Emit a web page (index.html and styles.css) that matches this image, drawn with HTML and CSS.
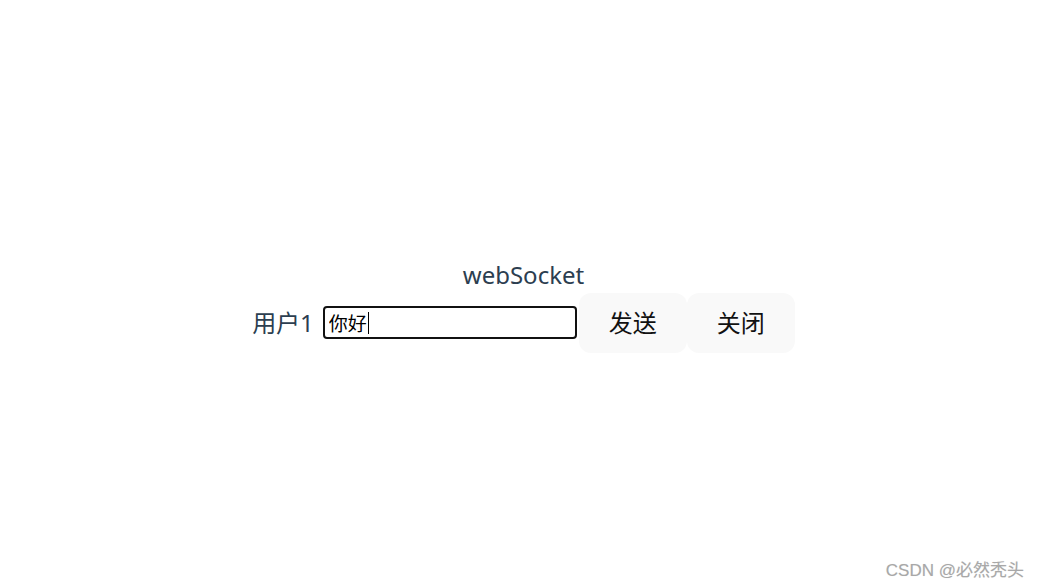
FILE: index.html
```html
<!DOCTYPE html>
<html lang="zh-CN">
<head>
    <meta charset="UTF-8">
    <meta name="viewport" content="width=device-width, initial-scale=1.0">
    <title>webSocket</title>
    <link rel="stylesheet" href="styles.css">
</head>
<body>
    <div id="app">
        <div class="title">webSocket</div>
        <div class="chat-row">
            <span class="user-name">用户1</span>
            <span class="input-wrap">
                <input type="text" class="msg-input" value="你好">
                <span class="caret"></span>
            </span>
            <button class="btn">发送</button>
            <button class="btn">关闭</button>
        </div>
    </div>
    <div class="watermark">CSDN @必然秃头</div>
</body>
</html>
```

FILE: styles.css
```css
:root {
    --text-main: #2c3e50;
    --btn-bg: #f9f9f9;
}

* {
    margin: 0;
    padding: 0;
    box-sizing: border-box;
}

body {
    font-family: "Noto Sans", "Noto Sans CJK SC", sans-serif;
    color: var(--text-main);
    background: #ffffff;
    min-height: 100vh;
    display: flex;
    justify-content: center;
    align-items: center;
}

#app {
    display: flex;
    flex-direction: column;
    align-items: center;
    padding: 22px 0 0 8px;
}

.title {
    font-size: 24px;
    line-height: 36px;
}

.chat-row {
    display: flex;
    align-items: center;
}

.user-name {
    font-size: 24px;
    line-height: 32px;
    margin-right: 9px;
}

.input-wrap {
    position: relative;
    display: inline-flex;
    margin-right: 2px;
}

.msg-input {
    width: 254px;
    height: 33px;
    border: 2px solid #111111;
    border-radius: 4px;
    padding: 0 4px;
    font-family: "Noto Sans CJK SC", sans-serif;
    font-size: 19px;
    color: #000000;
    outline: none;
}

.caret {
    position: absolute;
    left: 45px;
    top: 6px;
    width: 1px;
    height: 22px;
    background: #000000;
}

.btn {
    font-family: "Noto Sans", "Noto Sans CJK SC", sans-serif;
    font-size: 24px;
    line-height: 32px;
    padding: 14px 30px;
    border: none;
    border-radius: 12px;
    background: var(--btn-bg);
    color: #111111;
    cursor: pointer;
}

.watermark {
    position: absolute;
    right: 15px;
    bottom: 6px;
    font-family: "Liberation Sans", "Noto Sans CJK SC", sans-serif;
    font-size: 17px;
    color: #a8a8a8;
    text-shadow: 0 0 1px #e0e0e0;
}
```
